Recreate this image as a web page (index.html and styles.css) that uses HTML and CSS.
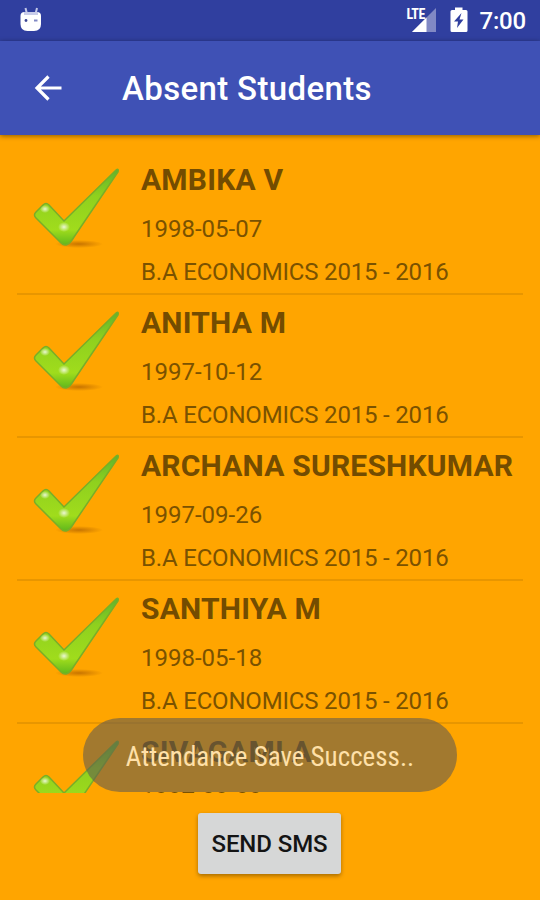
FILE: index.html
```html
<!DOCTYPE html>
<html lang="en">
<head>
    <meta charset="UTF-8">
    <meta name="viewport" content="width=device-width, initial-scale=1.0">
    <title>Absent Students</title>
    <link rel="stylesheet" href="styles.css">
</head>
<body>
    <svg class="defs" width="0" height="0">
        <defs>
            <linearGradient id="green" x1="0" y1="0" x2="0" y2="1">
                <stop offset="0" stop-color="#5fb52c"/>
                <stop offset="0.35" stop-color="#8fd01e"/>
                <stop offset="0.8" stop-color="#a0dc1c"/>
                <stop offset="1" stop-color="#5fb81c"/>
            </linearGradient>
            <radialGradient id="shade">
                <stop offset="0" stop-color="#b06000" stop-opacity="0.7"/>
                <stop offset="1" stop-color="#b06000" stop-opacity="0"/>
            </radialGradient>
            <radialGradient id="shine">
                <stop offset="0" stop-color="#fff" stop-opacity="0.8"/>
                <stop offset="1" stop-color="#fff" stop-opacity="0"/>
            </radialGradient>
            <symbol id="check" viewBox="0 0 90 84">
                <ellipse cx="47" cy="76" rx="24" ry="4" fill="url(#shade)"/>
                <path d="M4 50 Q1 47 4 44 L11 37 Q14 34 17 37 L32 53 L84 2 Q87 0 86 4 L42 69 Q35 81 29 75 Z" fill="url(#green)" stroke="#78ae28" stroke-width="1.500"/>
                <ellipse cx="13" cy="41" rx="5" ry="4" fill="url(#shine)"/>
                <ellipse cx="32" cy="59" rx="6" ry="5" fill="url(#shine)"/>
            </symbol>
        </defs>
    </svg>

    <div class="status-bar">
        <svg class="robot" width="24" height="26" viewBox="0 0 24 26">
            <path d="M6.500 1l1.500 6M18 1l-1.500 6" stroke="#c3c8e8" stroke-width="2"/>
            <path d="M1.500 9q0-4 4-4h12.500q4 0 4 4v8q0 7-7 7h-6.500q-7 0-7-7z" fill="#fff"/>
            <path d="M5 5h14v3h-14z" fill="#c9cdea"/>
            <circle cx="7" cy="13.500" r="1.400" fill="#3c4694"/>
            <path d="M15 13.500h3.500" stroke="#8189c4" stroke-width="2"/>
        </svg>
        <div class="status-icons">
            <div class="signal">
                <span class="lte">LTE</span>
                <svg width="25" height="24" viewBox="0 0 25 24">
                    <path d="M1 24L25 0v24z" fill="#8189c4"/>
                    <path d="M1 24L15.500 9.500V24z" fill="#fff"/>
                </svg>
            </div>
            <svg class="battery" width="18" height="26" viewBox="0 0 18 26">
                <path d="M5 0.500h7.500v2.500h3.500q1.500 0 1.500 1.500v19q0 1.500-1.500 1.500h-14q-1.500 0-1.500-1.500v-19q0-1.500 1.500-1.500h3z" fill="#fff"/>
                <path d="M11.500 6L4 14.500h4l-1 6.500 6.500-8.500H9.500z" fill="#303f9f"/>
            </svg>
            <span class="time">7:00</span>
        </div>
    </div>

    <div class="toolbar">
        <svg class="back" width="28" height="28" viewBox="0 0 28 28">
            <path d="M14.500 2.500L3 14l11.500 11.500M3 14h24.500" fill="none" stroke="#fff" stroke-width="3.200"/>
        </svg>
        <h1>Absent Students</h1>
    </div>

    <div class="list">
        <div class="student">
            <svg class="check"><use href="#check"/></svg>
            <div class="info">
                <h2>AMBIKA V</h2>
                <p class="date">1998-05-07</p>
                <p class="course">B.A ECONOMICS 2015 - 2016</p>
            </div>
        </div>
        <div class="student">
            <svg class="check"><use href="#check"/></svg>
            <div class="info">
                <h2>ANITHA M</h2>
                <p class="date">1997-10-12</p>
                <p class="course">B.A ECONOMICS 2015 - 2016</p>
            </div>
        </div>
        <div class="student">
            <svg class="check"><use href="#check"/></svg>
            <div class="info">
                <h2>ARCHANA SURESHKUMAR</h2>
                <p class="date">1997-09-26</p>
                <p class="course">B.A ECONOMICS 2015 - 2016</p>
            </div>
        </div>
        <div class="student">
            <svg class="check"><use href="#check"/></svg>
            <div class="info">
                <h2>SANTHIYA M</h2>
                <p class="date">1998-05-18</p>
                <p class="course">B.A ECONOMICS 2015 - 2016</p>
            </div>
        </div>
        <div class="student">
            <svg class="check"><use href="#check"/></svg>
            <div class="info">
                <h2>SIVAGAMI A</h2>
                <p class="date">1997-09-09</p>
            </div>
        </div>
    </div>

    <div class="footer">
        <button>SEND SMS</button>
    </div>

    <div class="toast"><span>Attendance Save Success..</span></div>
</body>
</html>
```
FILE: styles.css
```css
* {
    box-sizing: border-box;
}
body {
    margin: 0;
    width: 540px;
    height: 900px;
    display: flex;
    flex-direction: column;
    position: relative;
    overflow: hidden;
    background-color: #ffa500;
    font-family: Roboto, sans-serif;
}
h1, h2, p {
    margin: 0;
    white-space: nowrap;
}
.defs {
    position: absolute;
}
.status-bar {
    height: 41px;
    flex: none;
    display: flex;
    justify-content: space-between;
    align-items: flex-start;
    padding: 7px 14px 0 19px;
    background-color: #303f9f;
}
.status-icons {
    display: flex;
    color: white;
}
.signal {
    display: flex;
    align-items: flex-start;
    padding-top: 1px;
}
.lte {
    width: 4px;
    font-size: 14px;
    font-weight: bold;
    font-stretch: 75%;
    line-height: 13px;
    letter-spacing: -0.5px;
    white-space: nowrap;
}
.battery {
    margin-left: 14px;
}
.time {
    margin-left: 12px;
    font-size: 24px;
    font-weight: 500;
    line-height: 29px;
    letter-spacing: -0.2px;
}
.toolbar {
    height: 94px;
    flex: none;
    display: flex;
    align-items: center;
    padding-left: 34px;
    background-color: #3f51b5;
    box-shadow: 0 1px 5px rgba(0,0,0,0.45);
}
.toolbar h1 {
    margin: 1px 0 0 60px;
    color: white;
    font-size: 33px;
    font-weight: 500;
    letter-spacing: 0.35px;
}
.list {
    height: 641px;
    flex: none;
    margin-top: 17px;
    padding: 0 17px;
    overflow: hidden;
}
.student {
    height: 143px;
    display: flex;
    border-bottom: 2px solid #e89600;
}
.check {
    width: 90px;
    height: 84px;
    margin: 16px 0 0 15px;
}
.info {
    padding: 10px 0 0 19px;
    color: #7a5200;
}
.info h2 {
    color: #734c00;
    font-size: 30px;
    line-height: 36px;
    letter-spacing: 0.2px;
}
.date, .course {
    font-size: 24px;
    line-height: 28px;
}
.date {
    margin-top: 17px;
}
.course {
    margin-top: 15px;
    letter-spacing: -0.18px;
}
.footer {
    display: flex;
    justify-content: center;
    padding: 20px 1px 0 0;
}
button {
    width: 143px;
    height: 61px;
    padding: 0;
    border: none;
    border-radius: 3px;
    background-color: #d6d7d7;
    box-shadow: 0 2px 4px rgba(0,0,0,0.35);
    color: #141414;
    font-family: inherit;
    font-size: 24px;
    font-weight: 500;
    letter-spacing: -0.1px;
}
.toast {
    position: absolute;
    left: 83px;
    top: 718px;
    width: 374px;
    height: 74px;
    display: flex;
    justify-content: center;
    align-items: center;
    padding-top: 4px;
    border-radius: 37px;
    background-color: rgba(97,90,80,0.59);
    color: #ffe0a8;
    font-size: 27px;
    white-space: nowrap;
}
.toast span {
    font-stretch: 75%;
}
```
